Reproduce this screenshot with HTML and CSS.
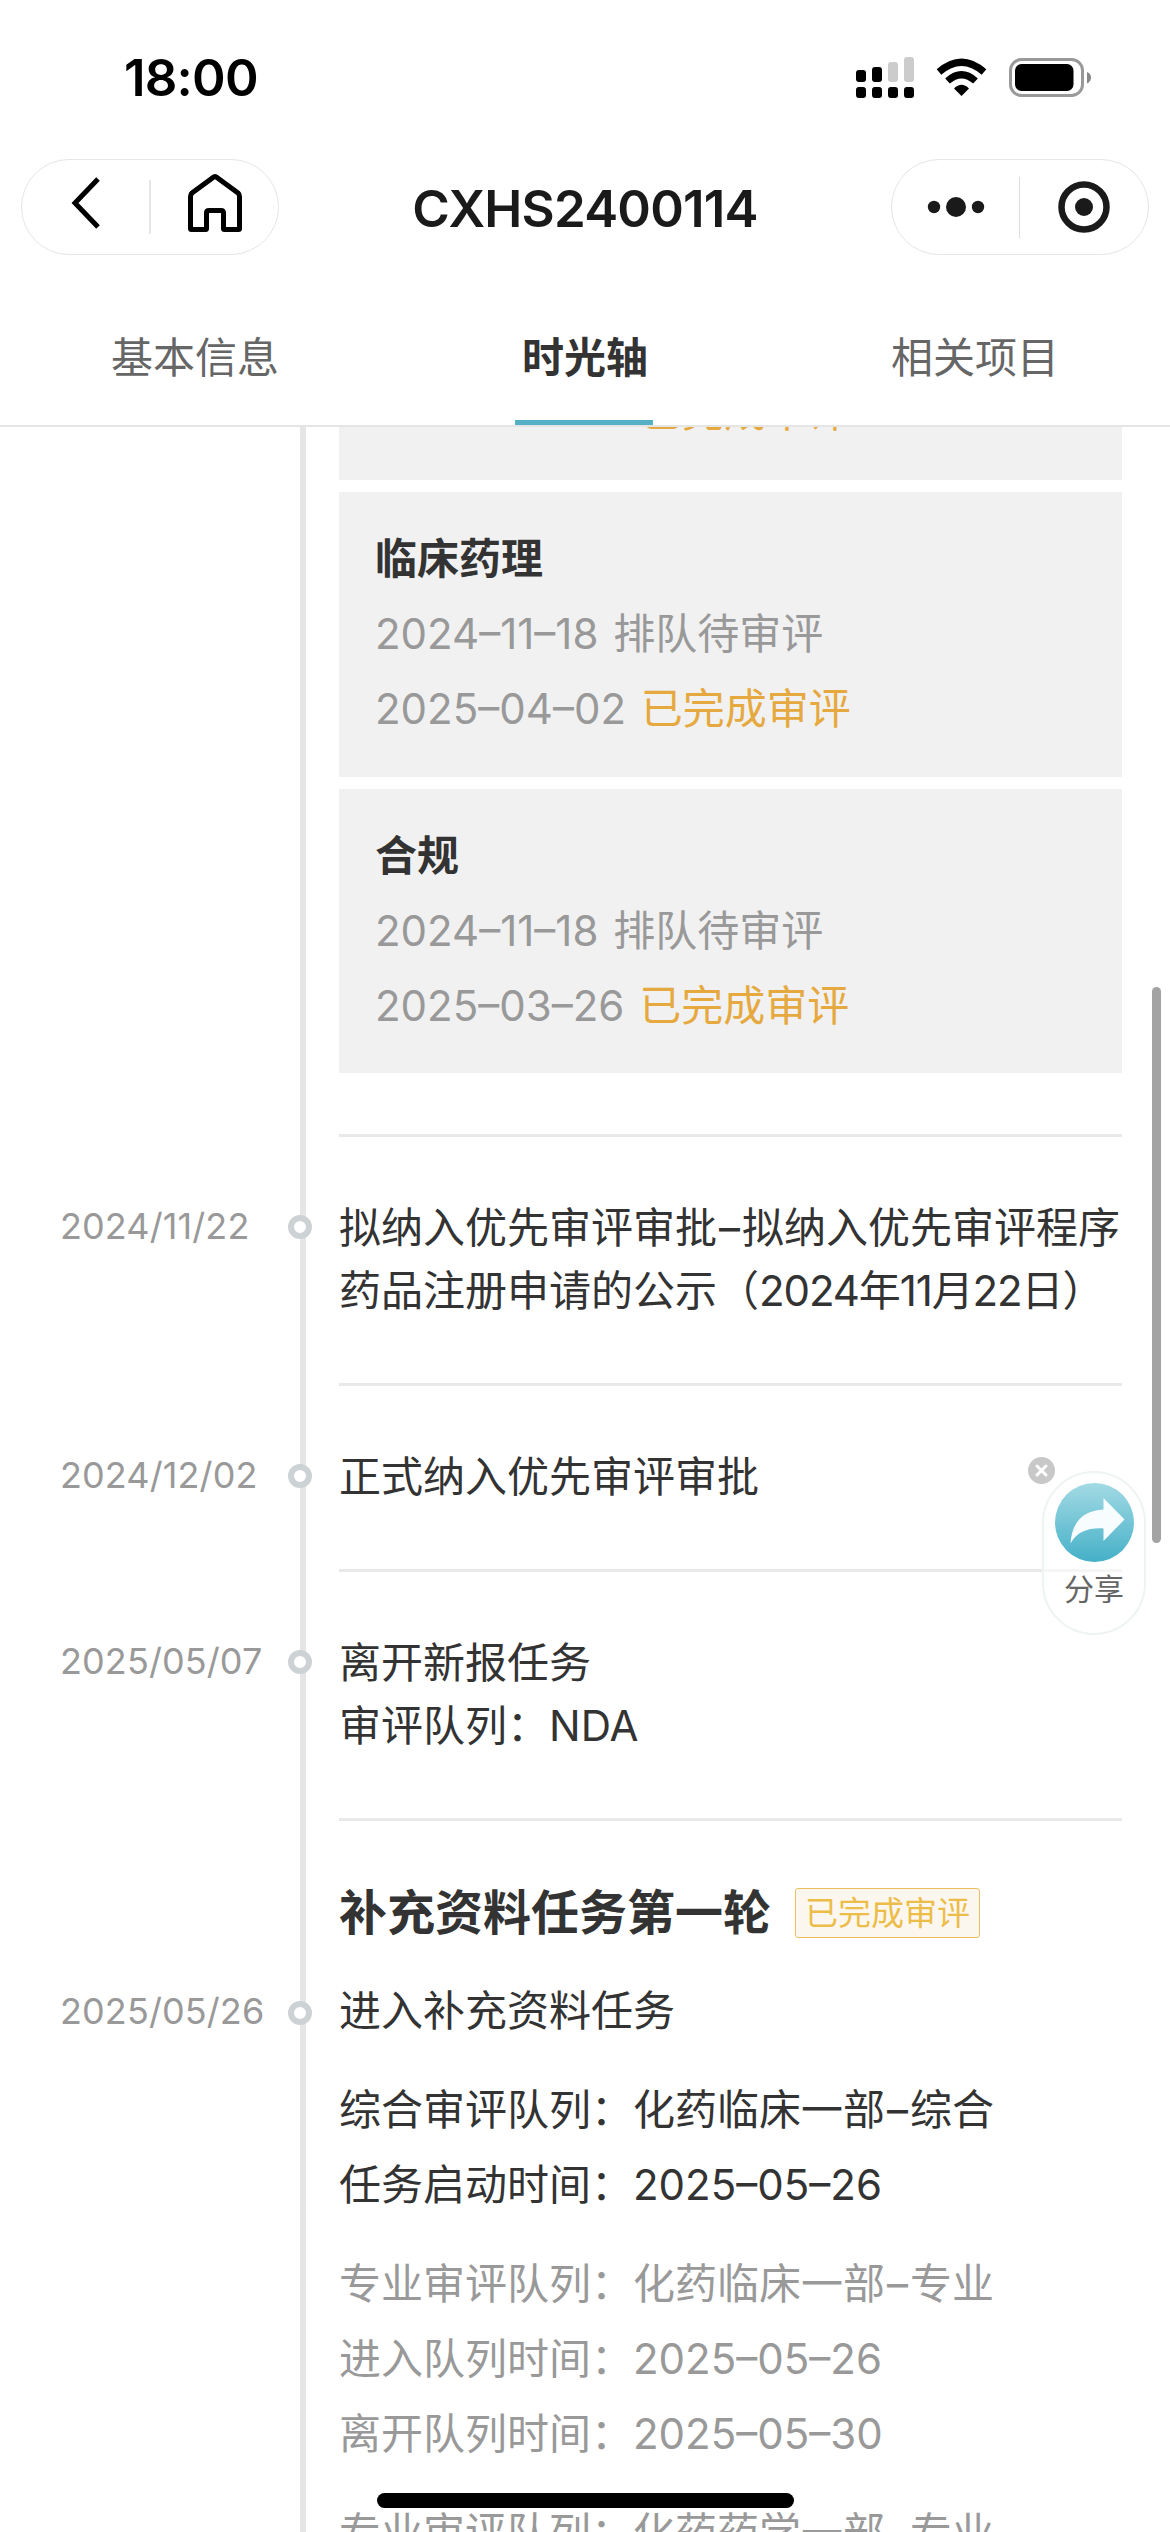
FILE: index.html
```html
<!DOCTYPE html>
<html lang="zh-CN">
<head>
    <meta charset="UTF-8">
    <meta name="viewport" content="width=device-width, initial-scale=1.0">
    <title>CXHS2400114</title>
    <link rel="stylesheet" href="styles.css">
</head>
<body>

    <div class="status-bar">
        <div class="clock">18:00</div>
        <svg class="status-icons" width="240" height="44" viewBox="0 0 240 44">
            <!-- signal -->
            <g fill="#000">
                <rect x="0" y="15" width="10" height="12" rx="3"/>
                <rect x="16" y="12" width="10" height="15" rx="3"/>
                <rect x="32" y="7" width="10" height="20" rx="3" fill="#ccc"/>
                <rect x="48" y="2" width="10" height="25" rx="3" fill="#ccc"/>
                <rect x="0" y="32" width="10" height="11" rx="3"/>
                <rect x="16" y="32" width="10" height="11" rx="3"/>
                <rect x="32" y="32" width="10" height="11" rx="3"/>
                <rect x="48" y="32" width="10" height="11" rx="3"/>
            </g>
            <!-- wifi -->
            <g fill="none" stroke="#000" stroke-width="7">
                <path d="M83 17Q105.500 -2.500 128 17"/>
                <path d="M91.500 26Q105.500 13.500 119.500 26"/>
            </g>
            <path d="M98 33.500Q105.500 26 113 33.500L105.500 41Z"/>
            <!-- battery -->
            <rect x="154.500" y="4.500" width="72" height="36" rx="11" fill="none" stroke="#999" stroke-width="3"/>
            <rect x="159" y="9" width="58.500" height="27" rx="6.500"/>
            <path d="M231 17Q235 18.500 235 22.500Q235 26.500 231 28.500Z" fill="#888"/>
        </svg>
    </div>

    <div class="nav-bar">
        <div class="nav-pill">
            <div class="nav-button back">
                <svg width="30" height="54" viewBox="0 0 30 54">
                    <path d="M27 3L4 27L27 51" fill="none" stroke="#000" stroke-width="5"/>
                </svg>
            </div>
            <div class="divider"></div>
            <div class="nav-button home">
                <svg width="56" height="60" viewBox="0 0 56 60">
                    <path d="M28 3.500Q29 3.500 30 4.500L51 20Q52.500 21.300 52.500 23.500V55.500Q52.500 56.500 51.500 56.500H37.500Q36.500 56.500 36.500 55.500V40Q36.500 37.500 34 37.500H22Q19.500 37.500 19.500 40V55.500Q19.500 56.500 18.500 56.500H4.500Q3.500 56.500 3.500 55.500V23.500Q3.500 21.300 5 20L26 4.500Q27 3.500 28 3.500Z" fill="none" stroke="#000" stroke-width="5"/>
                </svg>
            </div>
        </div>
        <div class="nav-title">CXHS2400114</div>
        <div class="nav-pill">
            <div class="nav-button">
                <svg width="60" height="24" viewBox="0 0 60 24" fill="#1a1a1a">
                    <circle cx="8" cy="12" r="6.200"/>
                    <circle cx="30" cy="12" r="10"/>
                    <circle cx="52" cy="12" r="6.200"/>
                </svg>
            </div>
            <div class="divider tall"></div>
            <div class="nav-button">
                <svg width="52" height="52" viewBox="0 0 52 52">
                    <circle cx="26" cy="26" r="22.500" fill="none" stroke="#1a1a1a" stroke-width="6.500"/>
                    <circle cx="26" cy="26" r="9" fill="#1a1a1a"/>
                </svg>
            </div>
        </div>
    </div>

    <div class="tabs">
        <div class="tab">基本信息</div>
        <div class="tab active">时光轴</div>
        <div class="tab">相关项目</div>
    </div>

    <div class="timeline">
        <div class="row">
            <div class="date"></div>
            <div class="content cards">
                <div class="card clipped">
                    <div class="card-line"><span class="done">已完成审评</span></div>
                </div>
                <div class="card">
                    <div class="card-title">临床药理</div>
                    <div class="card-line">2024–11–18 <span>排队待审评</span></div>
                    <div class="card-line">2025–04–02 <span class="done">已完成审评</span></div>
                </div>
                <div class="card">
                    <div class="card-title">合规</div>
                    <div class="card-line">2024–11–18 <span>排队待审评</span></div>
                    <div class="card-line">2025–03–26 <span class="done">已完成审评</span></div>
                </div>
            </div>
        </div>

        <div class="row">
            <div class="date">2024/11/22</div>
            <div class="content">
                <div class="entry">
                    <div class="dot"></div>
                    <p>拟纳入优先审评审批<span class="dash">–</span>拟纳入优先审评程序<br>药品注册申请的公示（<span class="tight">2024年11月22日</span>）</p>
                </div>
            </div>
        </div>

        <div class="row">
            <div class="date">2024/12/02</div>
            <div class="content">
                <div class="entry">
                    <div class="dot"></div>
                    <p>正式纳入优先审评审批</p>
                </div>
            </div>
        </div>

        <div class="row">
            <div class="date">2025/05/07</div>
            <div class="content">
                <div class="entry">
                    <div class="dot"></div>
                    <p>离开新报任务<br>审评队列：NDA</p>
                </div>
            </div>
        </div>

        <div class="row with-heading">
            <div class="date">2025/05/26</div>
            <div class="content">
                <div class="entry">
                    <div class="heading">
                        <h2>补充资料任务第一轮</h2>
                        <span class="badge">已完成审评</span>
                    </div>
                    <div class="dot"></div>
                    <p>进入补充资料任务</p>
                    <div class="queue main">
                        <div>综合审评队列：化药临床一部<span class="dash">–</span>综合</div>
                        <div>任务启动时间：2025–05–26</div>
                    </div>
                    <div class="queue">
                        <div>专业审评队列：化药临床一部<span class="dash">–</span>专业</div>
                        <div>进入队列时间：2025–05–26</div>
                        <div>离开队列时间：2025–05–30</div>
                    </div>
                    <div class="queue">
                        <div>专业审评队列：化药药学一部<span class="dash">–</span>专业</div>
                    </div>
                </div>
            </div>
        </div>
    </div>

    <div class="share">
        <svg width="79" height="79" viewBox="0 0 79 79">
            <defs>
                <linearGradient id="shareFill" x1="0" y1="0" x2="0" y2="1">
                    <stop offset="0" stop-color="#a3dae4"/>
                    <stop offset="1" stop-color="#45b0c8"/>
                </linearGradient>
            </defs>
            <circle cx="39.500" cy="39.500" r="39.500" fill="url(#shareFill)"/>
            <path d="M15.500 60.500C17 38 29 27.500 48.500 26.500V15L69.500 36.500L48.500 58V45.500C34 44.500 22 48.500 15.500 60.500Z" fill="#f7fdff"/>
        </svg>
        <span>分享</span>
    </div>
    <div class="share-close">
        <svg width="27" height="27" viewBox="0 0 27 27">
            <circle cx="13.500" cy="13.500" r="13.500" fill="#c8c8c8"/>
            <path d="M9 9L18 18M18 9L9 18" stroke="#fff" stroke-width="3" stroke-linecap="round"/>
        </svg>
    </div>
    <div class="scrollbar"></div>
    <div class="home-indicator"></div>

</body>
</html>
```

FILE: styles.css
```css
* {
    box-sizing: border-box;
}

body {
    font-family: Inter, "Noto Sans CJK SC", sans-serif;
    font-size: 42px;
    color: #333;
    background-color: #fff;
    margin: 0;
    width: 1170px;
    height: 2532px;
    overflow: hidden;
    position: relative;
    display: flex;
    flex-direction: column;
}

/* Status bar */
.status-bar {
    height: 159px;
    flex: none;
    display: flex;
    justify-content: space-between;
    padding: 47px 74px 0 124px;
}

.clock {
    font-size: 51px;
    line-height: 62px;
    font-weight: 600;
    color: #000;
    letter-spacing: -0.8px;
}

.status-icons {
    margin-top: 8px;
}

/* Navigation */
.nav-bar {
    height: 96px;
    flex: none;
    display: flex;
    justify-content: space-between;
    align-items: center;
    padding: 0 21px;
}

.nav-pill {
    width: 258px;
    height: 96px;
    border: 1px solid #e6e6e6;
    border-radius: 48px;
    display: flex;
    align-items: center;
}

.nav-button {
    flex: 1;
    display: flex;
    justify-content: center;
}

.back {
    padding-bottom: 8px;
}

.home {
    padding: 0 0 9px;
}

.divider {
    width: 2px;
    height: 54px;
    background-color: #e6e6e6;
}

.divider.tall {
    width: 1px;
    height: 61px;
    background-color: #ddd;
}

.nav-title {
    font-size: 51px;
    line-height: 62px;
    font-weight: 600;
    color: #1a1a1a;
    letter-spacing: -0.8px;
    padding-top: 3px;
}

/* Tabs */
.tabs {
    height: 172px;
    flex: none;
    display: flex;
    border-bottom: 2px solid #e5e5e5;
    padding-top: 34px;
}

.tab {
    flex: 1;
    text-align: center;
    line-height: 137px;
    color: #666;
    position: relative;
}

.tab.active {
    color: #333;
    font-weight: 700;
}

.tab.active::after {
    content: "";
    position: absolute;
    left: 125px;
    bottom: 0;
    width: 138px;
    height: 5px;
    background-color: #55b0c5;
}

/* Timeline */
.timeline {
    flex: 1;
    min-height: 0;
    overflow: hidden;
}

.row {
    display: flex;
}

.date {
    width: 300px;
    flex: none;
    padding: 61px 0 0 60px;
    font-size: 36px;
    line-height: 63px;
    color: #999;
    letter-spacing: 0.1px;
}

.with-heading .date {
    padding-top: 162px;
}

.content {
    flex: 1;
    border-left: 6px solid #e5e5e5;
    padding: 0 48px 0 33px;
}

.cards {
    padding-bottom: 61px;
}

.card {
    background-color: #f1f1f1;
    height: 284.5px;
    margin-bottom: 12px;
    padding: 29px 36px 0;
    line-height: 75px;
}

.card.clipped {
    height: 53px;
    padding: 0 0 0 301px;
    overflow: hidden;
}

.card.clipped .card-line {
    margin-top: -53px;
}

.card:last-child {
    margin-bottom: 0;
}

.card-title {
    font-weight: 700;
}

.card-line {
    color: #999;
    word-spacing: 3px;
}

.card-line .done {
    color: #e6a93f;
}

.entry {
    border-top: 3px solid #e9e9e9;
    padding: 59px 0 61px;
    line-height: 63px;
    position: relative;
    white-space: nowrap;
}

.entry p {
    margin: 0;
}

.dash {
    padding: 0 2px;
}

.tight {
    letter-spacing: -1.1px;
}

.dot {
    position: absolute;
    left: -51px;
    top: 78px;
    width: 24px;
    height: 24px;
    border: 6px solid #cdd2d4;
    border-radius: 50%;
    background-color: #fff;
}

.with-heading .dot {
    top: 180px;
}

.heading {
    display: flex;
    align-items: center;
    height: 63px;
    padding-top: 2px;
    margin-bottom: 36px;
}

.heading h2 {
    font-size: 48px;
    margin: 0 24px 0 0;
}

.badge {
    height: 50px;
    padding: 0 9px;
    border: 1px solid #e9bf62;
    border-radius: 3px;
    background-color: #fcf7ee;
    color: #ecbd49;
    font-size: 33px;
    line-height: 48px;
}

.queue {
    margin-top: 24px;
    line-height: 75px;
    color: #999;
}

.queue.main {
    margin-top: 30px;
    color: #333;
}

/* Floating share button */
.share {
    position: absolute;
    left: 1042px;
    top: 1471px;
    width: 104px;
    height: 164px;
    border: 2px solid #eef3f3;
    border-radius: 52px;
    background-color: rgba(255, 255, 255, 0.6);
    display: flex;
    flex-direction: column;
    align-items: center;
    padding-top: 10px;
    font-size: 30px;
    line-height: 54px;
    color: #666;
}

.share-close {
    position: absolute;
    left: 1028px;
    top: 1457px;
    width: 27px;
    height: 27px;
    display: flex;
}

.scrollbar {
    position: absolute;
    left: 1152px;
    top: 987px;
    width: 9px;
    height: 556px;
    border-radius: 5px;
    background-color: #a3a3a3;
}

.home-indicator {
    position: absolute;
    left: 377px;
    top: 2493px;
    width: 417px;
    height: 15px;
    border-radius: 8px;
    background-color: #000;
}
```
